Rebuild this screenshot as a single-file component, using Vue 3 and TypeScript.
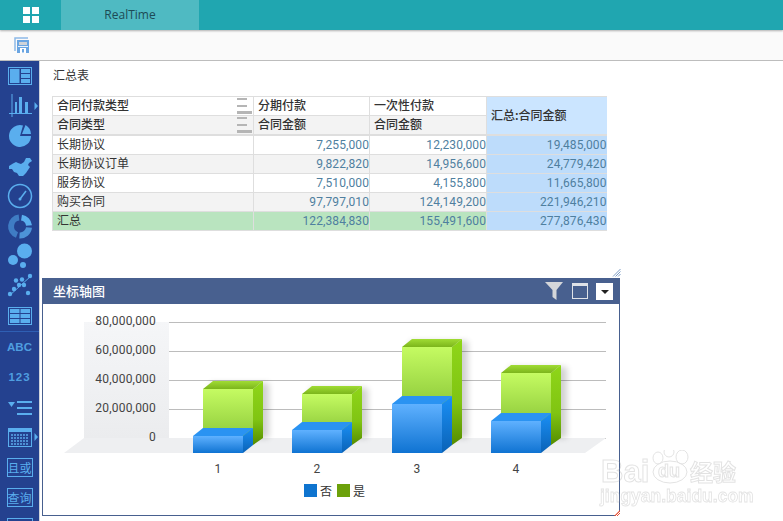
<template>
	<div class="page">
		<header class="topbar">
			<div class="home">
				<span class="home-grid"><i></i><i></i><i></i><i></i></span>
			</div>
			<div class="tab">RealTime</div>
		</header>

		<div class="toolbar">
			<svg class="save" width="18" height="18" viewBox="0 0 18 18">
				<path d="M2 15V2h13" fill="none" stroke="#8db9e8" stroke-width="1.5" />
				<path d="M4 4h12v13H4z" fill="#6aa5e2" />
				<rect x="6" y="6" width="8" height="3" fill="#cfd3d8" />
				<rect x="5" y="10" width="10" height="1" fill="#eaf2fb" />
				<rect x="7" y="12" width="6" height="5" fill="#fff" />
				<rect x="9" y="13" width="2" height="3.500" fill="#6aa5e2" />
			</svg>
		</div>

		<div class="body">
			<nav class="sidebar">
				<div class="item">
					<svg width="39" height="30" viewBox="0 0 39 30">
						<rect x="8.500" y="6.500" width="23" height="17" class="line" />
						<rect x="10" y="8" width="9.500" height="14" class="fill" />
						<rect x="21" y="8" width="9" height="4" class="fill" />
						<rect x="21" y="13" width="9" height="4" class="fill" />
						<rect x="21" y="18" width="9" height="4" class="fill" />
					</svg>
				</div>
				<div class="item">
					<svg width="39" height="30" viewBox="0 0 39 30">
						<path d="M12 3v23M9 22.500h23" class="line" />
						<rect x="15" y="11" width="2" height="11" class="fill" />
						<rect x="19" y="6" width="3" height="16" class="fill" />
						<rect x="25" y="11" width="3" height="11" class="fill" />
						<path d="M34.500 11v8l3.500-4z" class="fill" />
					</svg>
				</div>
				<div class="item">
					<svg width="39" height="30" viewBox="0 0 39 30">
						<path d="M20 15L31 15A11 11 0 1 1 23 4.400Z" class="fill" />
						<path d="M22 13L25.500 4A11 11 0 0 1 31 13Z" class="fill" />
					</svg>
				</div>
				<div class="item">
					<svg width="39" height="30" viewBox="0 0 39 30">
						<path d="M9 15L13 12.500L16 11L18 12L21 13L24 11L26 7L30 7L32 10L29 12L28 14L30 16L28 19L26 22L23 25L19 25L17 22L14 21L12 18L9 18Z" class="fill" />
					</svg>
				</div>
				<div class="item">
					<svg width="39" height="30" viewBox="0 0 39 30">
						<circle cx="20" cy="15" r="11.500" class="line thick" />
						<path d="M20 18l6-8" class="line thick" />
						<circle cx="20" cy="18" r="1.500" class="fill" />
					</svg>
				</div>
				<div class="item">
					<svg width="39" height="30" viewBox="0 0 39 30">
						<path d="M19 6.600A9 9 0 0 0 17 24" fill="none" stroke="#3f7cc4" stroke-width="6" />
						<path d="M21.500 6.600A9 9 0 0 1 29 14.500" fill="none" stroke="#5aaeee" stroke-width="6" />
						<path d="M29 16.500A9 9 0 0 1 19.500 24.500" fill="none" stroke="#4d93d8" stroke-width="6" />
					</svg>
				</div>
				<div class="item">
					<svg width="39" height="30" viewBox="0 0 39 30">
						<circle cx="24.500" cy="10" r="7.500" class="fill" />
						<circle cx="13" cy="19" r="5" class="fill" />
						<circle cx="23" cy="24" r="3" class="fill" />
					</svg>
				</div>
				<div class="item">
					<svg width="39" height="30" viewBox="0 0 39 30">
						<path d="M9 25L31 5" class="line" />
						<g class="fill">
							<circle cx="30" cy="5" r="2.200" />
							<circle cx="22" cy="8.500" r="2.200" />
							<circle cx="16" cy="9.500" r="2.200" />
							<circle cx="24" cy="14" r="2.200" />
							<circle cx="19" cy="14" r="2.200" />
							<circle cx="14" cy="18" r="2.200" />
							<circle cx="10" cy="23" r="2.200" />
							<circle cx="28" cy="22" r="2.200" />
						</g>
					</svg>
				</div>
				<div class="item">
					<svg width="39" height="30" viewBox="0 0 39 30">
						<rect x="8.500" y="6.500" width="23" height="17" class="line" />
						<rect x="10" y="8" width="9.500" height="4" class="fill" />
						<rect x="20.500" y="8" width="9.500" height="4" class="fill" />
						<rect x="10" y="13" width="9.500" height="4" class="fill" />
						<rect x="20.500" y="13" width="9.500" height="4" class="fill" />
						<rect x="10" y="18" width="9.500" height="4" class="fill" />
						<rect x="20.500" y="18" width="9.500" height="4" class="fill" />
					</svg>
				</div>
				<div class="divider"></div>
				<div class="item"><span class="word">ABC</span></div>
				<div class="item"><span class="word digits">123</span></div>
				<div class="item">
					<svg width="39" height="30" viewBox="0 0 39 30">
						<path d="M8 10h7l-3.500 5z" class="fill" />
						<rect x="17" y="9" width="15" height="2" class="fill" />
						<rect x="17" y="15" width="15" height="2" class="fill" />
						<rect x="17" y="21" width="15" height="2" class="fill" />
					</svg>
				</div>
				<div class="item">
					<svg width="39" height="30" viewBox="0 0 39 30">
						<rect x="8.500" y="6.500" width="23" height="18" class="line" />
						<rect x="8" y="6" width="24" height="4" class="fill" />
						<g class="dim">
							<rect v-for="c in calendarCells" :key="c.id" :x="c.x" :y="c.y" width="2" height="2" />
						</g>
						<path d="M34.500 11v8l3.500-4z" class="fill" />
					</svg>
				</div>
				<div class="item"><span class="boxed">且或</span></div>
				<div class="item"><span class="boxed">查询</span></div>
				<div class="item"><span class="boxed">&nbsp;</span></div>
			</nav>

			<main class="main">
				<div class="title">汇总表</div>

				<table class="pivot">
					<colgroup>
						<col style="width: 201px" />
						<col style="width: 116px" />
						<col style="width: 117px" />
						<col style="width: 120px" />
					</colgroup>
					<thead>
						<tr>
							<th class="with-handle">
								合同付款类型
								<span class="handle"><i></i><i></i><i></i></span>
							</th>
							<th>分期付款</th>
							<th>一次性付款</th>
							<th class="total-head" rowspan="2">汇总:合同金额</th>
						</tr>
						<tr class="sub">
							<th class="with-handle">
								合同类型
								<span class="handle"><i></i><i></i><i></i></span>
							</th>
							<th>合同金额</th>
							<th>合同金额</th>
						</tr>
					</thead>
					<tbody>
						<tr v-for="row in rows" :key="row.name" :class="{ alt: row.alt, sum: row.sum }">
							<td class="name">{{ row.name }}</td>
							<td class="num">{{ row.a }}</td>
							<td class="num">{{ row.b }}</td>
							<td class="num total">{{ row.c }}</td>
						</tr>
					</tbody>
				</table>

				<svg class="grip" width="9" height="9" viewBox="0 0 9 9">
					<path d="M1 8.500L8.500 1M3.500 8.500L8.500 3.500M6 8.500L8.500 6" stroke="#7d9cc4" stroke-width="1" />
				</svg>

				<section class="panel">
					<div class="panel-head">
						<span class="panel-title">坐标轴图</span>
						<svg class="funnel" width="18" height="18" viewBox="0 0 18 18">
							<path d="M0 0h18l-6.500 8v10l-4-3V8z" fill="#d4d6da" />
						</svg>
						<span class="window"></span>
						<span class="drop"></span>
					</div>

					<svg class="chart" width="576" height="177" viewBox="43 304 576 177">
						<defs>
							<linearGradient id="wall" x1="0" y1="0" x2="0" y2="1">
								<stop offset="0" stop-color="#f5f6f8" />
								<stop offset="1" stop-color="#ebecee" />
							</linearGradient>
							<linearGradient id="gFront" x1="0" y1="0" x2="0" y2="1">
								<stop offset="0" stop-color="#c5fb62" />
								<stop offset="1" stop-color="#90cc3c" />
							</linearGradient>
							<linearGradient id="gSide" x1="0" y1="0" x2="0" y2="1">
								<stop offset="0" stop-color="#8fd619" />
								<stop offset="0.6" stop-color="#80c412" />
								<stop offset="1" stop-color="#558d00" />
							</linearGradient>
							<linearGradient id="gTop" x1="0" y1="1" x2="0" y2="0">
								<stop offset="0" stop-color="#7cb51c" />
								<stop offset="1" stop-color="#a0dc34" />
							</linearGradient>
							<linearGradient id="bFront" x1="0" y1="0" x2="0" y2="1">
								<stop offset="0" stop-color="#5fb1ff" />
								<stop offset="1" stop-color="#0f73d2" />
							</linearGradient>
							<linearGradient id="bSide" x1="0" y1="0" x2="0" y2="1">
								<stop offset="0" stop-color="#1b90f6" />
								<stop offset="1" stop-color="#0a62b6" />
							</linearGradient>
							<filter id="soft" x="-30%" y="-30%" width="160%" height="160%">
								<feGaussianBlur stdDeviation="3" />
							</filter>
						</defs>

						<rect x="84" y="322" width="85" height="116" fill="url(#wall)" />
						<line v-for="t in ticks" :key="t.y" x1="169" x2="606" :y1="t.y + 0.5" :y2="t.y + 0.5" stroke="#bcbcbc" />
						<polygon points="84,438 606,438 585,453 64,453" fill="#eeeff1" />
						<text v-for="t in ticks" :key="'l' + t.y" class="axis" x="156" :y="t.y + 3" text-anchor="end">{{ t.label }}</text>

						<g v-for="b in bars" :key="b.label">
							<rect :x="b.gx + 8" :y="b.gy - 6" width="58" :height="444 - b.gy" fill="#000" opacity="0.18" filter="url(#soft)" />
							<polygon :points="b.gTop" fill="url(#gTop)" />
							<polygon :points="b.gSide" fill="url(#gSide)" />
							<rect :x="b.gx" :y="b.gy" width="50" :height="b.by - b.gy" fill="url(#gFront)" />
							<polygon :points="b.bTop" fill="#2a93f2" />
							<polygon :points="b.bSide" fill="url(#bSide)" />
							<rect :x="b.bx" :y="b.by" width="50" :height="453 - b.by" fill="url(#bFront)" />
							<text class="axis" :x="b.bx + 25" y="473" text-anchor="middle">{{ b.label }}</text>
						</g>
					</svg>

					<div class="legend">
						<span class="swatch blue"></span><span class="legend-text">否</span>
						<span class="swatch green"></span><span class="legend-text">是</span>
					</div>

					<span class="corner"></span>
				</section>
			</main>
		</div>

		<svg class="watermark" width="193" height="71" viewBox="590 450 193 71">
			<g fill="none" stroke="#9a9a9a" stroke-width="1">
				<text class="wm-big" x="601" y="482">Bai</text>
				<ellipse cx="670" cy="472" rx="17" ry="11" />
				<ellipse cx="658" cy="458" rx="5" ry="6" />
				<ellipse cx="669" cy="452" rx="5" ry="5" />
				<ellipse cx="682" cy="457" rx="6" ry="7" />
				<text class="wm-du" x="658" y="477">du</text>
				<text class="wm-cn" x="690" y="481">经验</text>
				<text class="wm-url" x="600" y="502">jingyan.baidu.com</text>
			</g>
		</svg>
	</div>
</template>

<script setup lang="ts">
interface PivotRow {
	name: string
	a: string
	b: string
	c: string
	alt?: boolean
	sum?: boolean
}

const rows: PivotRow[] = [
	{ name: '长期协议', a: '7,255,000', b: '12,230,000', c: '19,485,000' },
	{ name: '长期协议订单', a: '9,822,820', b: '14,956,600', c: '24,779,420', alt: true },
	{ name: '服务协议', a: '7,510,000', b: '4,155,800', c: '11,665,800' },
	{ name: '购买合同', a: '97,797,010', b: '124,149,200', c: '221,946,210', alt: true },
	{ name: '汇总', a: '122,384,830', b: '155,491,600', c: '277,876,430', sum: true },
]

const ticks = [
	{ y: 322, label: '80,000,000' },
	{ y: 351, label: '60,000,000' },
	{ y: 380, label: '40,000,000' },
	{ y: 409, label: '20,000,000' },
	{ y: 438, label: '0' },
]

const poly = (...pts: number[][]) => pts.map((p) => p.join(',')).join(' ')

// bx/by: blue front corner, gy: top of the green front
const bars = [
	{ label: '1', bx: 193, by: 436, gy: 389 },
	{ label: '2', bx: 292, by: 430, gy: 394 },
	{ label: '3', bx: 392, by: 404, gy: 347 },
	{ label: '4', bx: 491, by: 421, gy: 373 },
].map((b) => {
	const gx = b.bx + 10
	return {
		...b,
		gx,
		gTop: poly([gx, b.gy], [gx + 10, b.gy - 8], [gx + 60, b.gy - 8], [gx + 50, b.gy]),
		gSide: poly([gx + 50, b.gy], [gx + 60, b.gy - 8], [gx + 60, 438], [gx + 50, 445]),
		bTop: poly([b.bx, b.by], [b.bx + 10, b.by - 8], [b.bx + 60, b.by - 8], [b.bx + 50, b.by]),
		bSide: poly([b.bx + 50, b.by], [b.bx + 60, b.by - 8], [b.bx + 60, 445], [b.bx + 50, 453]),
	}
})

const calendarCells: { id: string; x: number; y: number }[] = []
for (let r = 0; r < 4; r++) {
	for (let c = 0; c < 6; c++) {
		calendarCells.push({ id: `${r}-${c}`, x: 11 + c * 3, y: 12 + r * 3 })
	}
}
</script>

<style scoped>
.page {
	position: relative;
	width: 783px;
	height: 521px;
	overflow: hidden;
	background: #fff;
	font-family: 'Noto Sans CJK SC', 'Liberation Sans', sans-serif;
	font-size: 12px;
	color: #333;
}

.topbar {
	position: relative;
	z-index: 2;
	display: flex;
	height: 30px;
	background: #20a6b0;
	box-shadow: 0 1px 2px rgba(0, 0, 0, 0.3);
}

.home {
	display: flex;
	align-items: center;
	justify-content: center;
	width: 61px;
}

.home-grid {
	display: grid;
	grid-template-columns: 7px 7px;
	grid-auto-rows: 7px;
	gap: 2px;
}

.home-grid i {
	background: #fff;
}

.tab {
	width: 138px;
	line-height: 30px;
	text-align: center;
	background: #4fbac2;
	color: #1d4a55;
	font-family: 'Open Sans', sans-serif;
}

.toolbar {
	display: flex;
	align-items: center;
	height: 30px;
	padding-left: 13px;
	background: #fafafa;
	border-bottom: 1px solid #bdbdbd;
}

.body {
	display: flex;
	height: 460px;
}

.sidebar {
	flex: none;
	width: 39px;
	background: #24418f;
	border-right: 1px solid #cfd3da;
}

.item {
	display: flex;
	align-items: center;
	justify-content: center;
	height: 30px;
}

.line {
	fill: none;
	stroke: #5aaeee;
	stroke-width: 1;
}

.line.thick {
	stroke-width: 1.5;
}

.fill {
	fill: #5aaeee;
}

.dim {
	fill: #4d8fd4;
}

.divider {
	height: 1px;
	background: #2f5fb4;
}

.word {
	font-family: 'Liberation Sans', sans-serif;
	font-weight: 700;
	font-size: 11.500px;
	color: #4f9ee0;
}

.word.digits {
	letter-spacing: 1px;
}

.boxed {
	display: block;
	width: 24px;
	height: 17px;
	border: 1px solid #5aaeee;
	font-size: 12px;
	line-height: 17px;
	text-align: center;
	color: #5aaeee;
	white-space: nowrap;
}

.main {
	position: relative;
	flex: 1;
	min-width: 0;
	padding-left: 2px;
}

.title {
	height: 35px;
	padding: 5px 0 0 11px;
	line-height: 17px;
	box-sizing: border-box;
}

.pivot {
	width: 554px;
	margin-left: 10px;
	table-layout: fixed;
	border-collapse: collapse;
}

.pivot th,
.pivot td {
	height: 18px;
	padding: 0;
	border: 1px solid #dedede;
	font-size: 12px;
	line-height: 18px;
	box-sizing: content-box;
	overflow: hidden;
	white-space: nowrap;
}

.pivot th {
	padding-left: 4px;
	font-weight: 500;
	line-height: 16px;
	vertical-align: top;
	text-align: left;
	color: #333;
}

.pivot thead tr:first-child th {
	background: #fff;
}

.pivot tr.sub th {
	background: #f3f3f3;
	border-bottom-width: 2px;
}

.pivot th.with-handle {
	position: relative;
}

.handle {
	position: absolute;
	top: 1px;
	right: 1px;
	display: flex;
	flex-direction: column;
	align-items: flex-start;
	gap: 5px;
	width: 15px;
}

.handle i {
	display: block;
	width: 10px;
	height: 2px;
	background: #b5b5b5;
}

.handle i:last-child {
	width: 15px;
	height: 3px;
	margin-top: -1px;
}

.pivot .total-head,
.pivot thead tr:first-child .total-head {
	background: #cbe5ff;
	line-height: 36px;
	border-right: none;
	border-bottom-width: 2px;
	border-color: #dedede;
}

.pivot td.name {
	padding-left: 4px;
	line-height: 16px;
	vertical-align: top;
}

.num {
	text-align: right;
	font-family: Roboto, sans-serif;
	letter-spacing: 0.100px;
	color: #4f7f9f;
}

.alt td {
	background: #f3f3f3;
}

.sum td {
	background: #b9e4bf;
}

.pivot td.total {
	background: #bddcfb;
	border-right: none;
}

.grip {
	position: absolute;
	top: 207px;
	left: 572px;
}

.panel {
	position: relative;
	width: 578px;
	height: 238px;
	margin-top: 47px;
	border: 1px solid #48608f;
	border-top: none;
	box-sizing: border-box;
	background: #fff;
}

.panel-head {
	display: flex;
	align-items: center;
	gap: 9px;
	height: 26px;
	margin: 0 -1px;
	padding: 0 7px 0 11px;
	background: #48608f;
}

.panel-title {
	flex: 1;
	padding-bottom: 2px;
	font-size: 13px;
	font-weight: 500;
	color: #fff;
}

.window {
	width: 14px;
	height: 12px;
	border: 1px solid #dfe2e8;
	border-top-width: 3px;
	box-sizing: content-box;
}

.drop {
	position: relative;
	width: 17px;
	height: 17px;
	margin-left: -1px;
	background: #fff;
}

.drop::after {
	content: '';
	position: absolute;
	top: 7px;
	left: 5px;
	border-left: 4px solid transparent;
	border-right: 4px solid transparent;
	border-top: 4px solid #222;
}

.chart {
	display: block;
}

.axis {
	font-family: Roboto, sans-serif;
	font-size: 12px;
	letter-spacing: 0.200px;
	fill: #444;
}

.legend {
	display: flex;
	align-items: center;
	justify-content: center;
	height: 13px;
	margin-top: 3px;
	padding-left: 7px;
}

.swatch {
	width: 13px;
	height: 13px;
}

.swatch.blue {
	background: #0e74cf;
}

.swatch.green {
	margin-left: 5px;
	background: #6ca10b;
}

.legend-text {
	margin-left: 3px;
	font-size: 12px;
	line-height: 13px;
}

.corner {
	position: absolute;
	right: -1px;
	bottom: -1px;
	width: 6px;
	height: 6px;
	background: repeating-linear-gradient(135deg, #e8553a 0 1px, #fff 1px 2px);
	clip-path: polygon(100% 0, 100% 100%, 0 100%);
}

.watermark {
	position: absolute;
	right: 0;
	bottom: 0;
	opacity: 0.28;
}

.wm-big {
	font-family: 'Liberation Sans', sans-serif;
	font-weight: 700;
	font-size: 31px;
}

.wm-du {
	font-family: 'Liberation Sans', sans-serif;
	font-weight: 700;
	font-size: 18px;
}

.wm-cn {
	font-size: 23px;
	font-weight: 700;
}

.wm-url {
	font-family: 'Liberation Sans', sans-serif;
	font-size: 17.500px;
	font-weight: 700;
	stroke-width: 0.8;
}
</style>
